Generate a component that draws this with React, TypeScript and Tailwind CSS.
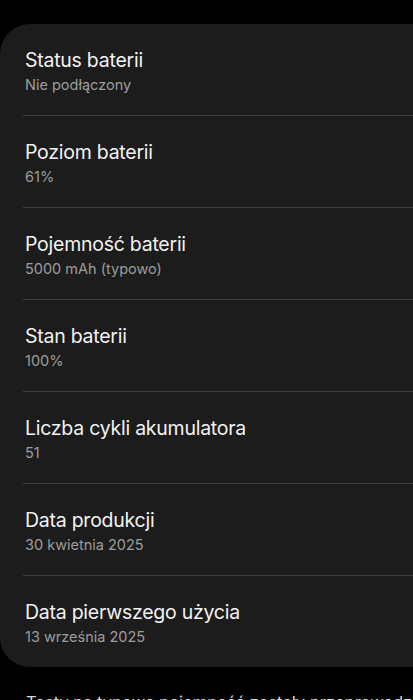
const ROWS = [
  { title: 'Status baterii', value: 'Nie podłączony' },
  { title: 'Poziom baterii', value: '61%' },
  { title: 'Pojemność baterii', value: '5000 mAh (typowo)' },
  { title: 'Stan baterii', value: '100%' },
  { title: 'Liczba cykli akumulatora', value: '51' },
  { title: 'Data produkcji', value: '30 kwietnia 2025' },
  { title: 'Data pierwszego użycia', value: '13 września 2025' },
];

export default function App() {
  return (
    <div
      className="h-[700px] w-[413px] overflow-hidden bg-black pt-[24px]"
      style={{ fontFamily: 'Inter, "Noto Sans", sans-serif' }}
    >
      {/* Info card, runs past the right edge */}
      <div className="mr-[-30px] rounded-[30px] bg-[#1c1c1c]">
        {ROWS.map((row, i) => (
          <div key={row.title}>
            {i > 0 && <div className="ml-[23px] h-px bg-[#3c3c3c]" />}
            <div className="h-[91px] pl-[25px] pt-[23px]">
              <p className="text-[19.5px] leading-[26px] tracking-[-0.25px] text-[#f2f2f2]">
                {row.title}
              </p>
              <p className="mt-[3px] text-[14.5px] leading-[18px] text-[#9c9c9c]">
                {row.value}
              </p>
            </div>
          </div>
        ))}
      </div>

      {/* Footnote, cut off by the bottom of the screen */}
      <p className="mt-[25px] whitespace-nowrap pl-[26px] text-[16.5px] leading-[20px] text-[#d8d8d8]">
        Testy na typową pojemność zostały przeprowadzone
      </p>
    </div>
  );
}
